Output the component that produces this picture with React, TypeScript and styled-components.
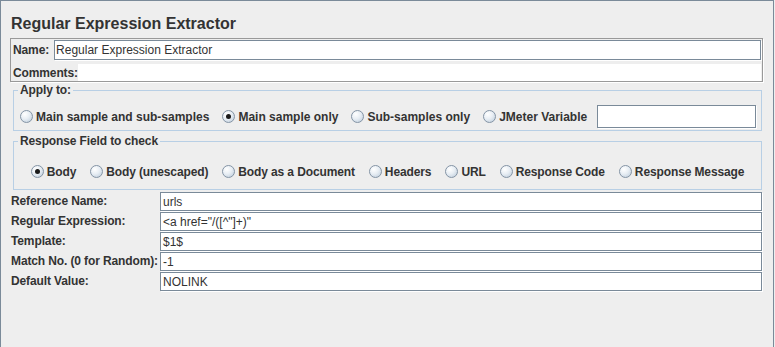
import React from 'react';
import styled, { createGlobalStyle } from 'styled-components';

const GlobalStyle = createGlobalStyle`
  html, body {
    margin: 0;
    padding: 0;
    background: #eeeeee;
  }
  body {
    font-family: "Liberation Sans", Arial, sans-serif;
    color: #333333;
  }
`;

const Frame = styled.div`
  width: 774px;
  height: 347px;
  box-sizing: border-box;
  border: 1px solid #7a8a99;
  border-bottom: none;
  padding: 0 10px 0 9px;
  background: #eeeeee;
`;

const Title = styled.div`
  margin: 13px 0 4px 1px;
  height: 20px;
  line-height: 20px;
  font-size: 16px;
  font-weight: bold;
`;

const NamePanel = styled.div`
  border: 1px solid #999999;
  box-shadow: 1px 1px 0 #ffffff;
  padding: 1px 1px 0 2px;
  height: 44px;
  box-sizing: border-box;
`;

const NameRow = styled.div`
  display: flex;
  align-items: center;
  gap: 5px;
  height: 20px;
`;

const CommentsRow = styled.div`
  display: flex;
  align-items: center;
  height: 17px;
  margin-top: 4px;
`;

const Label = styled.span`
  font-size: 12px;
  font-weight: bold;
  letter-spacing: -0.12px;
  white-space: nowrap;
`;

const TextField = styled.div<{ $width?: number; $height?: number; $pad?: number }>`
  box-sizing: border-box;
  height: ${(p) => p.$height ?? 20}px;
  ${(p) => (p.$width ? `width: ${p.$width}px;` : 'flex: 1;')}
  background: #ffffff;
  border: 1px solid #7a8a99;
  box-shadow: 1px 1px 0 #ffffff, inset 1px 1px 0 #ffffff;
  padding-left: ${(p) => p.$pad ?? 2}px;
  font-size: 12px;
  line-height: ${(p) => (p.$height ?? 20) - 2}px;
  color: #333333;
  white-space: nowrap;
  overflow: hidden;
`;

const CommentsArea = styled.div`
  flex: 1;
  height: 17px;
  background: #ffffff;
`;

const Group = styled.fieldset<{ $top: number }>`
  margin: ${(p) => p.$top}px 1px 0 3px;
  padding: 0;
  border: 1px solid #b8cfe5;
  min-width: 0;
`;

const Legend = styled.legend`
  margin-left: 4px;
  padding: 0 2px;
  font-size: 12px;
  font-weight: bold;
  letter-spacing: -0.12px;
  line-height: 14px;
`;

const RadioRow = styled.div<{ $center?: boolean; $pt: number; $pb: number; $gap: number; $spacing: number }>`
  display: flex;
  align-items: center;
  justify-content: ${(p) => (p.$center ? 'center' : 'flex-start')};
  gap: ${(p) => p.$gap}px;
  height: 23px;
  padding: ${(p) => `${p.$pt}px 0 ${p.$pb}px ${p.$center ? 0 : 6}px`};
  letter-spacing: ${(p) => p.$spacing}px;
`;

const RadioItem = styled.label`
  display: flex;
  align-items: center;
  gap: 3px;
  font-size: 12px;
  font-weight: bold;
  white-space: nowrap;
`;

const RadioDot = styled.span<{ $on?: boolean }>`
  position: relative;
  width: 13px;
  height: 13px;
  box-sizing: border-box;
  border-radius: 50%;
  border: 1px solid #8494a5;
  background: radial-gradient(circle at 35% 30%, #ffffff 0%, #e8eef4 45%, #b9c9d9 100%);

  &::after {
    content: '';
    display: ${(p) => (p.$on ? 'block' : 'none')};
    position: absolute;
    left: 3px;
    top: 3px;
    width: 5px;
    height: 5px;
    border-radius: 50%;
    background: #1a1a1a;
  }
`;

const Form = styled.div`
  display: grid;
  grid-template-columns: 150px 1fr;
  grid-auto-rows: 20px;
  margin: 2px 1px 0 0;
`;

const FormLabel = styled.div`
  padding-left: 1px;
  font-size: 12px;
  font-weight: bold;
  letter-spacing: -0.12px;
  line-height: 19px;
  white-space: nowrap;
`;

const FormField = styled(TextField)`
  height: 19px;
  line-height: 18px;
`;

const Radio: React.FC<{ label: string; on?: boolean }> = ({ label, on }) => (
  <RadioItem>
    <RadioDot $on={on} />
    {label}
  </RadioItem>
);

const fields: [string, string][] = [
  ['Reference Name:', 'urls'],
  ['Regular Expression:', '<a href="/([^"]+)"'],
  ['Template:', '$1$'],
  ['Match No. (0 for Random):', '-1'],
  ['Default Value:', 'NOLINK'],
];

const App: React.FC = () => {
  return (
    <>
      <GlobalStyle />
      <Frame>
        <Title>Regular Expression Extractor</Title>
        <NamePanel>
          <NameRow>
            <Label>Name:</Label>
            <TextField $pad={1}>Regular Expression Extractor</TextField>
          </NameRow>
          <CommentsRow>
            <Label>Comments:</Label>
            <CommentsArea />
          </CommentsRow>
        </NamePanel>

        <Group $top={1}>
          <Legend>Apply to:</Legend>
          <RadioRow $pt={8} $pb={2} $gap={13} $spacing={0}>
            <Radio label="Main sample and sub-samples" />
            <Radio label="Main sample only" on />
            <Radio label="Sub-samples only" />
            <Radio label="JMeter Variable" />
            <TextField $width={159} $height={23} style={{ marginLeft: -3 }} />
          </RadioRow>
        </Group>

        <Group $top={3}>
          <Legend>Response Field to check</Legend>
          <RadioRow $center $pt={12} $pb={6} $gap={14} $spacing={-0.12}>
            <Radio label="Body" on />
            <Radio label="Body (unescaped)" />
            <Radio label="Body as a Document" />
            <Radio label="Headers" />
            <Radio label="URL" />
            <Radio label="Response Code" />
            <Radio label="Response Message" />
          </RadioRow>
        </Group>

        <Form>
          {fields.map(([label, value]) => (
            <React.Fragment key={label}>
              <FormLabel>{label}</FormLabel>
              <FormField>{value}</FormField>
            </React.Fragment>
          ))}
        </Form>
      </Frame>
    </>
  );
};

export default App;
